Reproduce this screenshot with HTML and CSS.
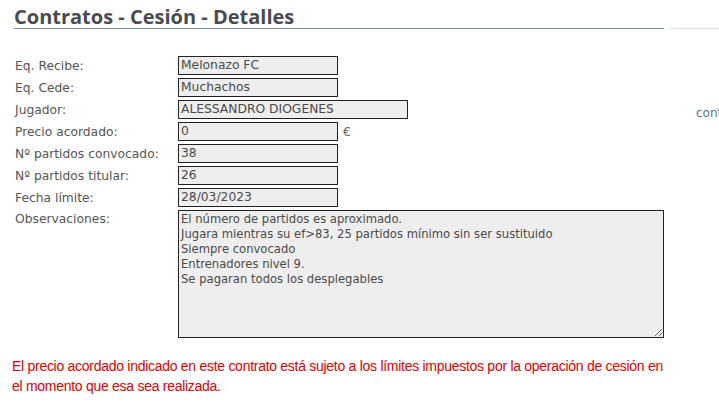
FILE: index.html
```html
<!DOCTYPE html>
<html lang="es">
<head>
<meta charset="utf-8">
<title>Contratos - Cesión - Detalles</title>
<link rel="stylesheet" href="styles.css">
</head>
<body>
<div class="page">
  <div class="main">
    <h1 class="title">Contratos - Cesión - Detalles</h1>
    <div class="form">
      <div class="row"><span class="label">Eq. Recibe:</span><span class="field">Melonazo FC</span></div>
      <div class="row"><span class="label">Eq. Cede:</span><span class="field">Muchachos</span></div>
      <div class="row"><span class="label">Jugador:</span><span class="field wide">ALESSANDRO DIOGENES</span></div>
      <div class="row"><span class="label">Precio acordado:</span><span class="field">0</span><span class="unit">€</span></div>
      <div class="row"><span class="label">Nº partidos convocado:</span><span class="field">38</span></div>
      <div class="row"><span class="label">Nº partidos titular:</span><span class="field">26</span></div>
      <div class="row"><span class="label">Fecha límite:</span><span class="field">28/03/2023</span></div>
      <div class="row area-row"><span class="label">Observaciones:</span><textarea class="area" readonly>El número de partidos es aproximado.
Jugara mientras su ef&gt;83, 25 partidos mínimo sin ser sustituido
Siempre convocado
Entrenadores nivel 9.
Se pagaran todos los desplegables</textarea></div>
    </div>
    <p class="notice">El precio acordado indicado en este contrato está sujeto a los límites impuestos por la operación de cesión en el momento que esa sea realizada.</p>
  </div>
  <div class="side">
    <div class="side-line"></div>
    <a class="side-link" href="#">contratos</a>
  </div>
</div>
</body>
</html>
```
FILE: styles.css
```css
html, body {
  margin: 0;
  padding: 0;
  background: #fff;
}
.page {
  display: flex;
  width: 719px;
  height: 410px;
  overflow: hidden;
}
.main {
  width: 650px;
  padding-left: 14px;
  flex: none;
}
.title {
  margin: 5px 0 0 0;
  font-family: "Open Sans", sans-serif;
  font-weight: bold;
  font-size: 20px;
  line-height: 23px;
  color: #4a4a52;
  border-bottom: 1px solid #7d8c99;
  padding-bottom: 0;
}
.form {
  margin-top: 27px;
  display: flex;
  flex-direction: column;
  gap: 3px;
}
.row {
  display: flex;
  align-items: center;
  height: 19px;
  font-family: "DejaVu Sans", sans-serif;
  font-size: 12.3px;
  color: #555;
}
.label {
  width: 163px;
  flex: none;
  padding-left: 1px;
}
.field {
  box-sizing: border-box;
  width: 160px;
  height: 19px;
  border: 1px solid #222;
  background: #eeeeee;
  padding: 0 2px;
  line-height: 17px;
  color: #4a4a4a;
  white-space: nowrap;
  overflow: hidden;
}
.field.wide {
  width: 230px;
}
.unit {
  margin-left: 5px;
  color: #666;
}
.area-row {
  align-items: flex-start;
  height: 128px;
}
.area-row .label {
  margin-top: 2px;
}
.area {
  box-sizing: border-box;
  width: 487px;
  height: 128px;
  margin: 0;
  border: 1px solid #222;
  background: #eeeeee;
  padding: 1px 2px;
  font-family: "DejaVu Sans", sans-serif;
  font-size: 11.6px;
  line-height: 15px;
  color: #4a4a4a;
  resize: both;
}
.notice {
  margin: 18px 0 0 -2px;
  width: 660px;
  font-family: "Liberation Sans", Arial, sans-serif;
  font-size: 14px;
  line-height: 20px;
  color: #e00000;
  letter-spacing: -0.28px;
}
.side {
  flex: 1;
  padding-top: 28px;
  padding-left: 6px;
}
.side-line {
  height: 1px;
  background: #e2e2e2;
}
.side-link {
  display: block;
  margin-top: 77px;
  margin-left: 26px;
  font-family: "DejaVu Sans", sans-serif;
  font-size: 12px;
  color: #5a7090;
  text-decoration: none;
  white-space: nowrap;
}
```
